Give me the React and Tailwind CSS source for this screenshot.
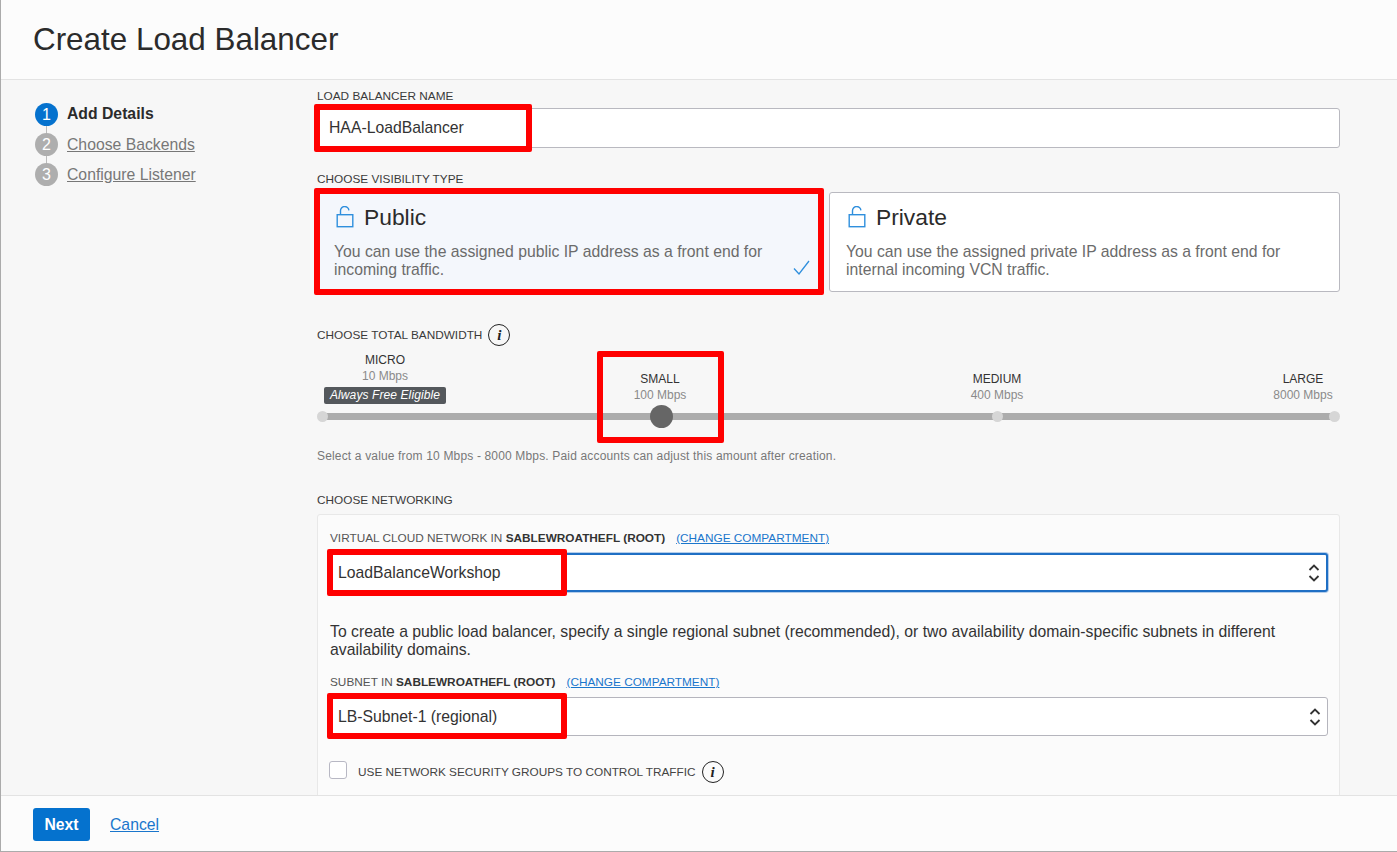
const RED = "absolute border-[6px] border-[#ff0000] rounded-[2px] pointer-events-none";

const Label = ({ children, className = "" }) => (
  <div className={`text-[11.8px] leading-[14px] text-[#3a3a3a] ${className}`}>{children}</div>
);

const InfoIcon = () => (
  <span className="inline-flex h-[22px] w-[22px] items-center justify-center rounded-full border-[1.5px] border-[#222] font-['Liberation_Serif',serif] text-[15px] font-bold italic leading-none text-[#222]">
    i
  </span>
);

const LockIcon = () => (
  <svg className="ml-[2px]" width="18" height="22" viewBox="0 0 18 22" fill="none" stroke="#2f8fdd" strokeWidth="1.4">
    <rect x="1.2" y="8.7" width="15.6" height="12" />
    <path d="M4.5 8.5V5a4.2 4.2 0 0 1 8.4 -.6" />
  </svg>
);

const Chevrons = () => (
  <svg width="12" height="22" viewBox="0 0 12 22" fill="none" stroke="#333" strokeWidth="1.8">
    <path d="M1.5 8 6 3.5 10.5 8" />
    <path d="M1.5 14 6 18.500 10.500 14" />
  </svg>
);

const Step = ({ n, label, active }) => (
  <div className="relative z-10 flex h-[23px] items-center">
    <span
      className={`flex h-[23px] w-[23px] items-center justify-center rounded-full text-[16px] text-white ${
        active ? "bg-[#0572ce]" : "bg-[#aeaeae]"
      }`}
    >
      {n}
    </span>
    <span
      className={`ml-[9px] text-[15.75px] leading-[20px] ${
        active ? "-mt-[2px] font-bold text-[#2b2b2b]" : "text-[#777] underline"
      }`}
    >
      {label}
    </span>
  </div>
);

const Card = ({ title, text, selected, children }) => (
  <div
    className={`relative h-[100px] rounded-[3px] border border-[#b9b9c0] pl-[16px] pr-[12px] pt-[11px] ${
      selected ? "w-[505px] bg-[#f4f7fc]" : "w-[511px] bg-white"
    }`}
  >
    <div className="flex h-[26px] items-center">
      <LockIcon />
      <span className="ml-[10px] text-[22.8px] leading-[26px] text-[#2b2b2b]">{title}</span>
    </div>
    <p className="mt-[13px] text-[15.75px] leading-[18px] text-[#6b6b6b]">{text}</p>
    {children}
  </div>
);

const SliderLabel = ({ title, sub, className = "" }) => (
  <div className={`text-center text-[12px] leading-[16px] ${className}`}>
    <div className="text-[#333]">{title}</div>
    <div className="text-[#8a8a8a]">{sub}</div>
  </div>
);

const Tick = ({ className }) => (
  <span className={`absolute top-[-2px] h-[11px] w-[11px] rounded-full bg-[#d6d6d6] ${className}`} />
);

const Select = ({ value, focused }) => (
  <div
    className={`flex h-[39px] items-center justify-between rounded-[3px] bg-white pr-[6px] text-[15.75px] text-[#333] ${
      focused
        ? "border-2 border-[#1f6fc4] pl-[7px] shadow-[0_0_0_1px_#b4cdea]"
        : "border border-[#b5b5bd] pl-[8px]"
    }`}
  >
    <span>{value}</span>
    <Chevrons />
  </div>
);

const Link = ({ children, className = "" }) => (
  <a className={`text-[#1a76cc] underline ${className}`}>{children}</a>
);

export default function App() {
  return (
    <div className="flex h-screen w-full flex-col overflow-hidden border-b border-l border-[#ababab] bg-[#f7f7f7] font-['Liberation_Sans',Arial,sans-serif]">
      {/* Header */}
      <header className="flex h-[80px] shrink-0 items-center border-b border-[#e3e3e3] bg-[#fcfcfc] pl-[32px]">
        <h1 className="text-[31.4px] leading-[36px] text-[#2b2b2b]">Create Load Balancer</h1>
      </header>

      <div className="flex min-h-0 flex-1 overflow-hidden">
        {/* Steps */}
        <nav className="relative w-[316px] shrink-0 pl-[34px] pt-[23px]">
          <span className="absolute left-[45px] top-[40px] h-[60px] w-px bg-[#bbb]" />
          <div className="flex flex-col gap-[7px]">
            <Step n="1" label="Add Details" active />
            <Step n="2" label="Choose Backends" />
            <Step n="3" label="Configure Listener" />
          </div>
        </nav>

        {/* Form */}
        <main className="w-[1023px] shrink-0 pt-[9px]">
          <Label>LOAD BALANCER NAME</Label>
          <div className="relative mt-[5px] flex h-[40px] items-center rounded-[3px] border border-[#b9b9c0] bg-white pl-[11px] text-[15.75px] text-[#333]">
            HAA-LoadBalancer
            <span className={`${RED} left-[-4px] top-[-5px] h-[48px] w-[218px]`} />
          </div>

          <Label className="mt-[24px]">CHOOSE VISIBILITY TYPE</Label>
          <div className="mt-[6px] flex gap-[7px]">
            <div className="relative">
              <Card
                selected
                title="Public"
                text="You can use the assigned public IP address as a front end for incoming traffic."
              >
                <svg className="absolute bottom-[16px] right-[11px]" width="17" height="15" viewBox="0 0 17 15" fill="none" stroke="#2f8fdd" strokeWidth="1.3">
                  <path d="M1 8.500 6 14 16 1" />
                </svg>
              </Card>
              <span className={`${RED} left-[-3px] top-[-4px] h-[107px] w-[510px]`} />
            </div>
            <Card
              title="Private"
              text="You can use the assigned private IP address as a front end for internal incoming VCN traffic."
            />
          </div>

          <div className="mt-[32px] flex h-[22px] items-center gap-[6px]">
            <Label>CHOOSE TOTAL BANDWIDTH</Label>
            <InfoIcon />
          </div>

          {/* Bandwidth slider */}
          <div className="relative mt-[6px] flex items-end">
            <div className="ml-[7px] w-[122px] text-center text-[12px] leading-[16px]">
              <div className="text-[#333]">MICRO</div>
              <div className="text-[#8a8a8a]">10 Mbps</div>
              <div className="mt-[3px] h-[17px] rounded-[2px] bg-[#54585c] italic leading-[17px] tracking-[0.1px] text-white">
                Always Free Eligible
              </div>
            </div>
            <SliderLabel title="SMALL" sub="100 Mbps" className="mb-px ml-[174px] w-[80px]" />
            <SliderLabel title="MEDIUM" sub="400 Mbps" className="mb-px ml-[257px] w-[80px]" />
            <SliderLabel title="LARGE" sub="8000 Mbps" className="mb-px ml-[235px] w-[62px]" />
          </div>
          <div className="relative ml-[5px] mr-[5px] mt-[9px] h-[7px] bg-[#acacac]">
            <Tick className="left-[-5px]" />
            <Tick className="left-[670px]" />
            <Tick className="right-[-5px]" />
            <span className="absolute left-[328px] top-[-8px] h-[23px] w-[23px] rounded-full bg-[#666]" />
            <span className={`${RED} left-[275px] top-[-62px] h-[92px] w-[127px]`} />
          </div>
          <p className="mt-[29px] text-[12px] leading-[14px] tracking-[0.16px] text-[#777]">
            Select a value from 10 Mbps - 8000 Mbps. Paid accounts can adjust this amount after creation.
          </p>

          <Label className="mt-[30px]">CHOOSE NETWORKING</Label>

          {/* Networking panel */}
          <section className="mt-[7px] rounded-[3px] border border-[#e8e8e8] bg-[#fbfbfb] px-[11px] pb-[30px] pt-[16px]">
            <Label className="ml-px text-[#555]">
              VIRTUAL CLOUD NETWORK IN <b className="text-[#333]">SABLEWROATHEFL (ROOT)</b>
              <Link className="ml-[11px]">(CHANGE COMPARTMENT)</Link>
            </Label>
            <div className="relative mt-[8px]">
              <Select value="LoadBalanceWorkshop" focused />
              <span className={`${RED} left-[-2px] top-[-4px] h-[47px] w-[240px]`} />
            </div>
            <p className="ml-px mt-[31px] text-[15.75px] leading-[18px] text-[#333]">
              To create a public load balancer, specify a single regional subnet (recommended), or two availability domain-specific subnets in different availability domains.
            </p>
            <Label className="ml-px mt-[16px] text-[#555]">
              SUBNET IN <b className="text-[#333]">SABLEWROATHEFL (ROOT)</b>
              <Link className="ml-[11px]">(CHANGE COMPARTMENT)</Link>
            </Label>
            <div className="relative mt-[8px]">
              <Select value="LB-Subnet-1 (regional)" />
              <span className={`${RED} left-[-2px] top-[-4px] h-[46px] w-[240px]`} />
            </div>
            <div className="mt-[25px] flex h-[22px] items-center">
              <span className="h-[18px] w-[18px] self-start rounded-[3px] border border-[#b8b8c4] bg-white" />
              <Label className="ml-[11px] text-[#444]">USE NETWORK SECURITY GROUPS TO CONTROL TRAFFIC</Label>
              <span className="ml-[6px] flex">
                <InfoIcon />
              </span>
            </div>
          </section>
        </main>
      </div>

      {/* Footer */}
      <footer className="flex h-[56px] shrink-0 items-center border-t border-[#e3e3e3] bg-[#fcfcfc] pl-[32px] pt-[2px]">
        <button className="h-[33px] w-[57px] rounded-[3px] bg-[#0572ce] text-[15.75px] font-bold text-white">Next</button>
        <Link className="ml-[20px] text-[15.75px]">Cancel</Link>
      </footer>
    </div>
  );
}
